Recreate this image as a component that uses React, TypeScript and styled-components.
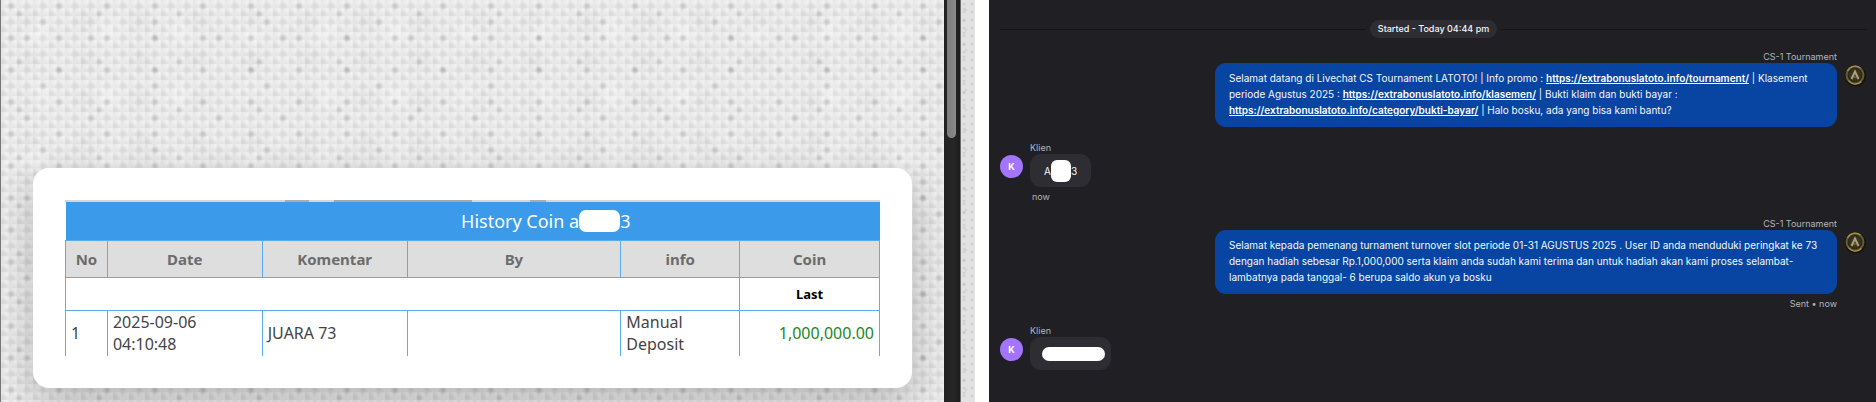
import React from "react";
import styled, { createGlobalStyle } from "styled-components";

const GlobalStyle = createGlobalStyle`
  *, *::before, *::after { box-sizing: border-box; }
  html, body { margin: 0; background: #fff; }
`;

const dot = (alpha: number, radius: number, x: string, y: string) =>
  `radial-gradient(circle at ${x} ${y}, rgba(105, 105, 105, ${alpha}) 0, rgba(105, 105, 105, 0) ${radius}px)`;

const Page = styled.main`
  display: grid;
  grid-template-columns: minmax(0, 975fr) minmax(0, 887fr);
  column-gap: 14px;
  min-height: 100vh;
`;

const HistoryPane = styled.section`
  display: flex;
  padding-right: 14px;
  background-color: #e2e2e2;
  background-image:
    ${dot(0.22, 2, "50%", "50%")},
    ${dot(0.2, 2, "25%", "75%")},
    ${dot(0.16, 2, "50%", "50%")};
  background-size: 8px 8px, 16px 12px, 12px 20px;
`;

const HistoryPage = styled.div`
  flex: 1;
  min-width: 0;
  overflow: hidden;
  border-left: 1px solid #777;
  padding: 168px 32px 14px;
  background-color: #e7e7e7;
  background-image:
    ${dot(0.2, 4, "10px", "6px")},
    ${dot(0.18, 4, "18px", "14px")},
    ${dot(0.22, 4, "26px", "38px")},
    ${dot(0.2, 4, "42px", "22px")},
    ${dot(0.18, 4, "58px", "70px")},
    ${dot(0.13, 5, "10px", "6px")},
    ${dot(0.13, 5, "2px", "14px")},
    radial-gradient(circle at 6px 2px, rgba(255, 255, 255, 0.5) 0, rgba(255, 255, 255, 0) 5px),
    radial-gradient(circle, rgba(170, 170, 170, 0.12) 0, rgba(170, 170, 170, 0) 16px),
    radial-gradient(circle, rgba(255, 255, 255, 0.3) 0, rgba(255, 255, 255, 0) 18px);
  background-size:
    48px 32px, 80px 48px, 64px 80px, 112px 64px, 96px 112px,
    16px 16px, 16px 16px, 8px 8px, 56px 40px, 72px 64px;
`;

const Card = styled.div`
  background: #fff;
  border-radius: 16px;
  padding: 32px;
  box-shadow: 0 14px 40px rgba(0, 0, 0, 0.22);
`;

const ScrollTrack = styled.div`
  flex: none;
  width: 17px;
  padding-left: 3px;
  background: linear-gradient(90deg, #222, #262626 60%, #1c1c1c);
  border-right: 1px solid #6b6b6b;
`;

const ScrollThumb = styled.div`
  width: 9px;
  height: 138px;
  border-radius: 0 0 5px 5px;
  background: linear-gradient(90deg, #7c7c7c, #8a8a8a);
`;

const TopEdge = styled.div`
  height: 2px;
  background: linear-gradient(
    90deg,
    #d6d6d6 27%, #a9adb1 27% 30%, #d6d6d6 30% 33%, #a3a8ae 33% 50%,
    #d6d6d6 50% 57%, #a9adb1 57% 59%, #d6d6d6 59%
  );
`;

const Table = styled.table`
  width: 100%;
  table-layout: fixed;
  border-collapse: collapse;
  font: 16px/22px "Noto Sans", "Open Sans", sans-serif;
  color: #444;
`;

const Title = styled.th`
  height: 38px;
  padding: 0 0 0 18%;
  background: #3b9ae9;
  color: #fff;
  font-size: 18px;
  font-weight: 400;
`;

const TitleText = styled.span`
  display: inline-flex;
  align-items: center;
  justify-content: center;
`;

const Mask = styled.span<{ $w: number; $h: number; $r: number }>`
  flex: none;
  width: ${(p) => p.$w}px;
  height: ${(p) => p.$h}px;
  border-radius: ${(p) => p.$r}px;
  background: #fff;
`;

const HeadCell = styled.th`
  height: 37px;
  padding: 0 4px;
  background: #dedede;
  border: 1px solid #5dadee;
  color: #6c6c6c;
  font-size: 15px;
`;

const Cell = styled.td<{ $align?: "center" | "right" }>`
  height: ${(p) => (p.$align === "center" ? 33 : 46)}px;
  padding: 0 5px;
  border: 1px solid #5dadee;
  border-bottom: ${(p) => (p.$align === "center" ? "1px solid #5dadee" : "0")};
  text-align: ${(p) => p.$align ?? "left"};
`;

const Last = styled.strong`
  color: #000;
  font-size: 13px;
`;

const Amount = styled.span`
  color: #1b8a1b;
`;

const Chat = styled.section`
  background: #202024;
  color: #f6f6f8;
  padding: 20px 9px 0 11px;
  font: 10px/16px Inter, "Liberation Sans", sans-serif;
`;

const Divider = styled.div`
  display: flex;
  align-items: center;
  gap: 4px;
  margin-bottom: 12px;
  &::before, &::after {
    content: "";
    flex: 1;
    height: 1px;
    background: #151518;
  }
`;

const Started = styled.span`
  padding: 0 8px;
  border-radius: 9px;
  background: #2d2d33;
  font-size: 9px;
  line-height: 18px;
  font-weight: 500;
`;

const Thread = styled.div`
  display: flex;
  flex-direction: column;
  gap: 14px;
`;

const Message = styled.article<{ $agent?: boolean }>`
  display: flex;
  flex-direction: ${(p) => (p.$agent ? "row-reverse" : "row")};
  gap: 7px;
`;

const Stack = styled.div<{ $agent?: boolean }>`
  display: flex;
  flex-direction: column;
  align-items: ${(p) => (p.$agent ? "flex-end" : "flex-start")};
  width: ${(p) => (p.$agent ? "72%" : "auto")};
  max-width: 622px;
`;

const Small = styled.span<{ $meta?: boolean }>`
  color: #b4b4ba;
  font-size: 9px;
  line-height: 13px;
  margin-top: ${(p) => (p.$meta ? 3 : 0)}px;
  padding-left: ${(p) => (p.$meta ? 2 : 0)}px;
`;

const AgentBubble = styled.p`
  margin: 0;
  width: 100%;
  padding: 7px 14px 9px;
  border-radius: 11px;
  background: #0845a3;
`;

const ClientBubble = styled.div<{ $tight?: boolean }>`
  display: flex;
  align-items: center;
  height: 33px;
  padding: ${(p) => (p.$tight ? "0 6px 0 12px" : "0 14px")};
  border-radius: 11px;
  background: #2d2d33;
`;

const ChatLink = styled.a`
  color: #fff;
  font-weight: 600;
  text-decoration: underline;
`;

const Initial = styled.span`
  flex: none;
  width: 23px;
  height: 23px;
  margin-top: 14px;
  border-radius: 50%;
  background: #a374ff;
  color: #fff;
  font-size: 9px;
  font-weight: 700;
  line-height: 23px;
  text-align: center;
`;

const Logo = styled.svg`
  flex: none;
  width: 23px;
  height: 23px;
  margin-top: 14px;
`;

function AgentLogo() {
  return (
    <Logo viewBox="0 0 23 23" aria-hidden="true">
      <circle cx="11.5" cy="12" r="10.5" fill="#14130e" />
      <circle cx="11" cy="11" r="8.5" fill="#2b291d" stroke="#6b5b28" strokeWidth="2" />
      <path d="M3.500 7a8.500 8.500 0 0 1 13-3M4.500 16.500a8.500 8.500 0 0 0 13 1" fill="none" stroke="#a8924a" strokeWidth="1.200" />
      <circle cx="11" cy="11" r="6" fill="#34342f" />
      <path d="M7.500 15L11 7.500L14.500 15" fill="none" stroke="#b3a263" strokeWidth="2" />
      <path d="M9 13h4" stroke="#8c7f50" strokeWidth="1" />
    </Logo>
  );
}

function AgentMessage({ children, status }: { children: React.ReactNode; status?: string }) {
  return (
    <Message $agent>
      <AgentLogo />
      <Stack $agent>
        <Small>CS-1 Tournament</Small>
        <AgentBubble>{children}</AgentBubble>
        {status && <Small $meta>{status}</Small>}
      </Stack>
    </Message>
  );
}

function ClientMessage({ children, status, tight }: { children: React.ReactNode; status?: string; tight?: boolean }) {
  return (
    <Message>
      <Initial>K</Initial>
      <Stack>
        <Small>Klien</Small>
        <ClientBubble $tight={tight}>{children}</ClientBubble>
        {status && <Small $meta>{status}</Small>}
      </Stack>
    </Message>
  );
}

const columns = [
  { name: "No", width: 42 },
  { name: "Date", width: 155 },
  { name: "Komentar", width: 145 },
  { name: "By", width: 214 },
  { name: "info", width: 119 },
  { name: "Coin", width: 140 },
];

export default function App() {
  return (
    <>
      <GlobalStyle />
      <Page>
        <HistoryPane>
          <HistoryPage>
            <Card>
              <TopEdge />
              <Table>
                <colgroup>
                  {columns.map((c) => (
                    <col key={c.name} style={{ width: `${(c.width / 815) * 100}%` }} />
                  ))}
                </colgroup>
                <thead>
                  <tr>
                    <Title colSpan={6}>
                      <TitleText>
                        History Coin a<Mask $w={41} $h={22} $r={7} />3
                      </TitleText>
                    </Title>
                  </tr>
                  <tr>
                    {columns.map((c) => (
                      <HeadCell key={c.name}>{c.name}</HeadCell>
                    ))}
                  </tr>
                </thead>
                <tbody>
                  <tr>
                    <Cell colSpan={5} $align="center" />
                    <Cell $align="center"><Last>Last</Last></Cell>
                  </tr>
                  <tr>
                    <Cell>1</Cell>
                    <Cell>2025-09-06<br />04:10:48</Cell>
                    <Cell>JUARA 73</Cell>
                    <Cell />
                    <Cell>Manual<br />Deposit</Cell>
                    <Cell $align="right"><Amount>1,000,000.00</Amount></Cell>
                  </tr>
                </tbody>
              </Table>
            </Card>
          </HistoryPage>
          <ScrollTrack><ScrollThumb /></ScrollTrack>
        </HistoryPane>
        <Chat>
          <Divider><Started>Started - Today 04:44 pm</Started></Divider>
          <Thread>
            <AgentMessage>
              Selamat datang di Livechat CS Tournament LATOTO! | Info promo :{" "}
              <ChatLink href="https://extrabonuslatoto.info/tournament/">https://extrabonuslatoto.info/tournament/</ChatLink>
              {" "}| Klasement periode Agustus 2025 :{" "}
              <ChatLink href="https://extrabonuslatoto.info/klasemen/">https://extrabonuslatoto.info/klasemen/</ChatLink>
              {" "}| Bukti klaim dan bukti bayar :{" "}
              <ChatLink href="https://extrabonuslatoto.info/category/bukti-bayar/">https://extrabonuslatoto.info/category/bukti-bayar/</ChatLink>
              {" "}| Halo bosku, ada yang bisa kami bantu?
            </AgentMessage>
            <ClientMessage status="now">
              A<Mask $w={20} $h={22} $r={6} />3
            </ClientMessage>
            <AgentMessage status="Sent • now">
              Selamat kepada pemenang turnament turnover slot periode 01-31 AGUSTUS 2025 . User ID anda menduduki
              peringkat ke 73 dengan hadiah sebesar Rp.1,000,000 serta klaim anda sudah kami terima dan untuk hadiah
              akan kami proses selambat-lambatnya pada tanggal- 6 berupa saldo akun ya bosku
            </AgentMessage>
            <ClientMessage tight>
              <Mask $w={63} $h={14} $r={7} />
            </ClientMessage>
          </Thread>
        </Chat>
      </Page>
    </>
  );
}
